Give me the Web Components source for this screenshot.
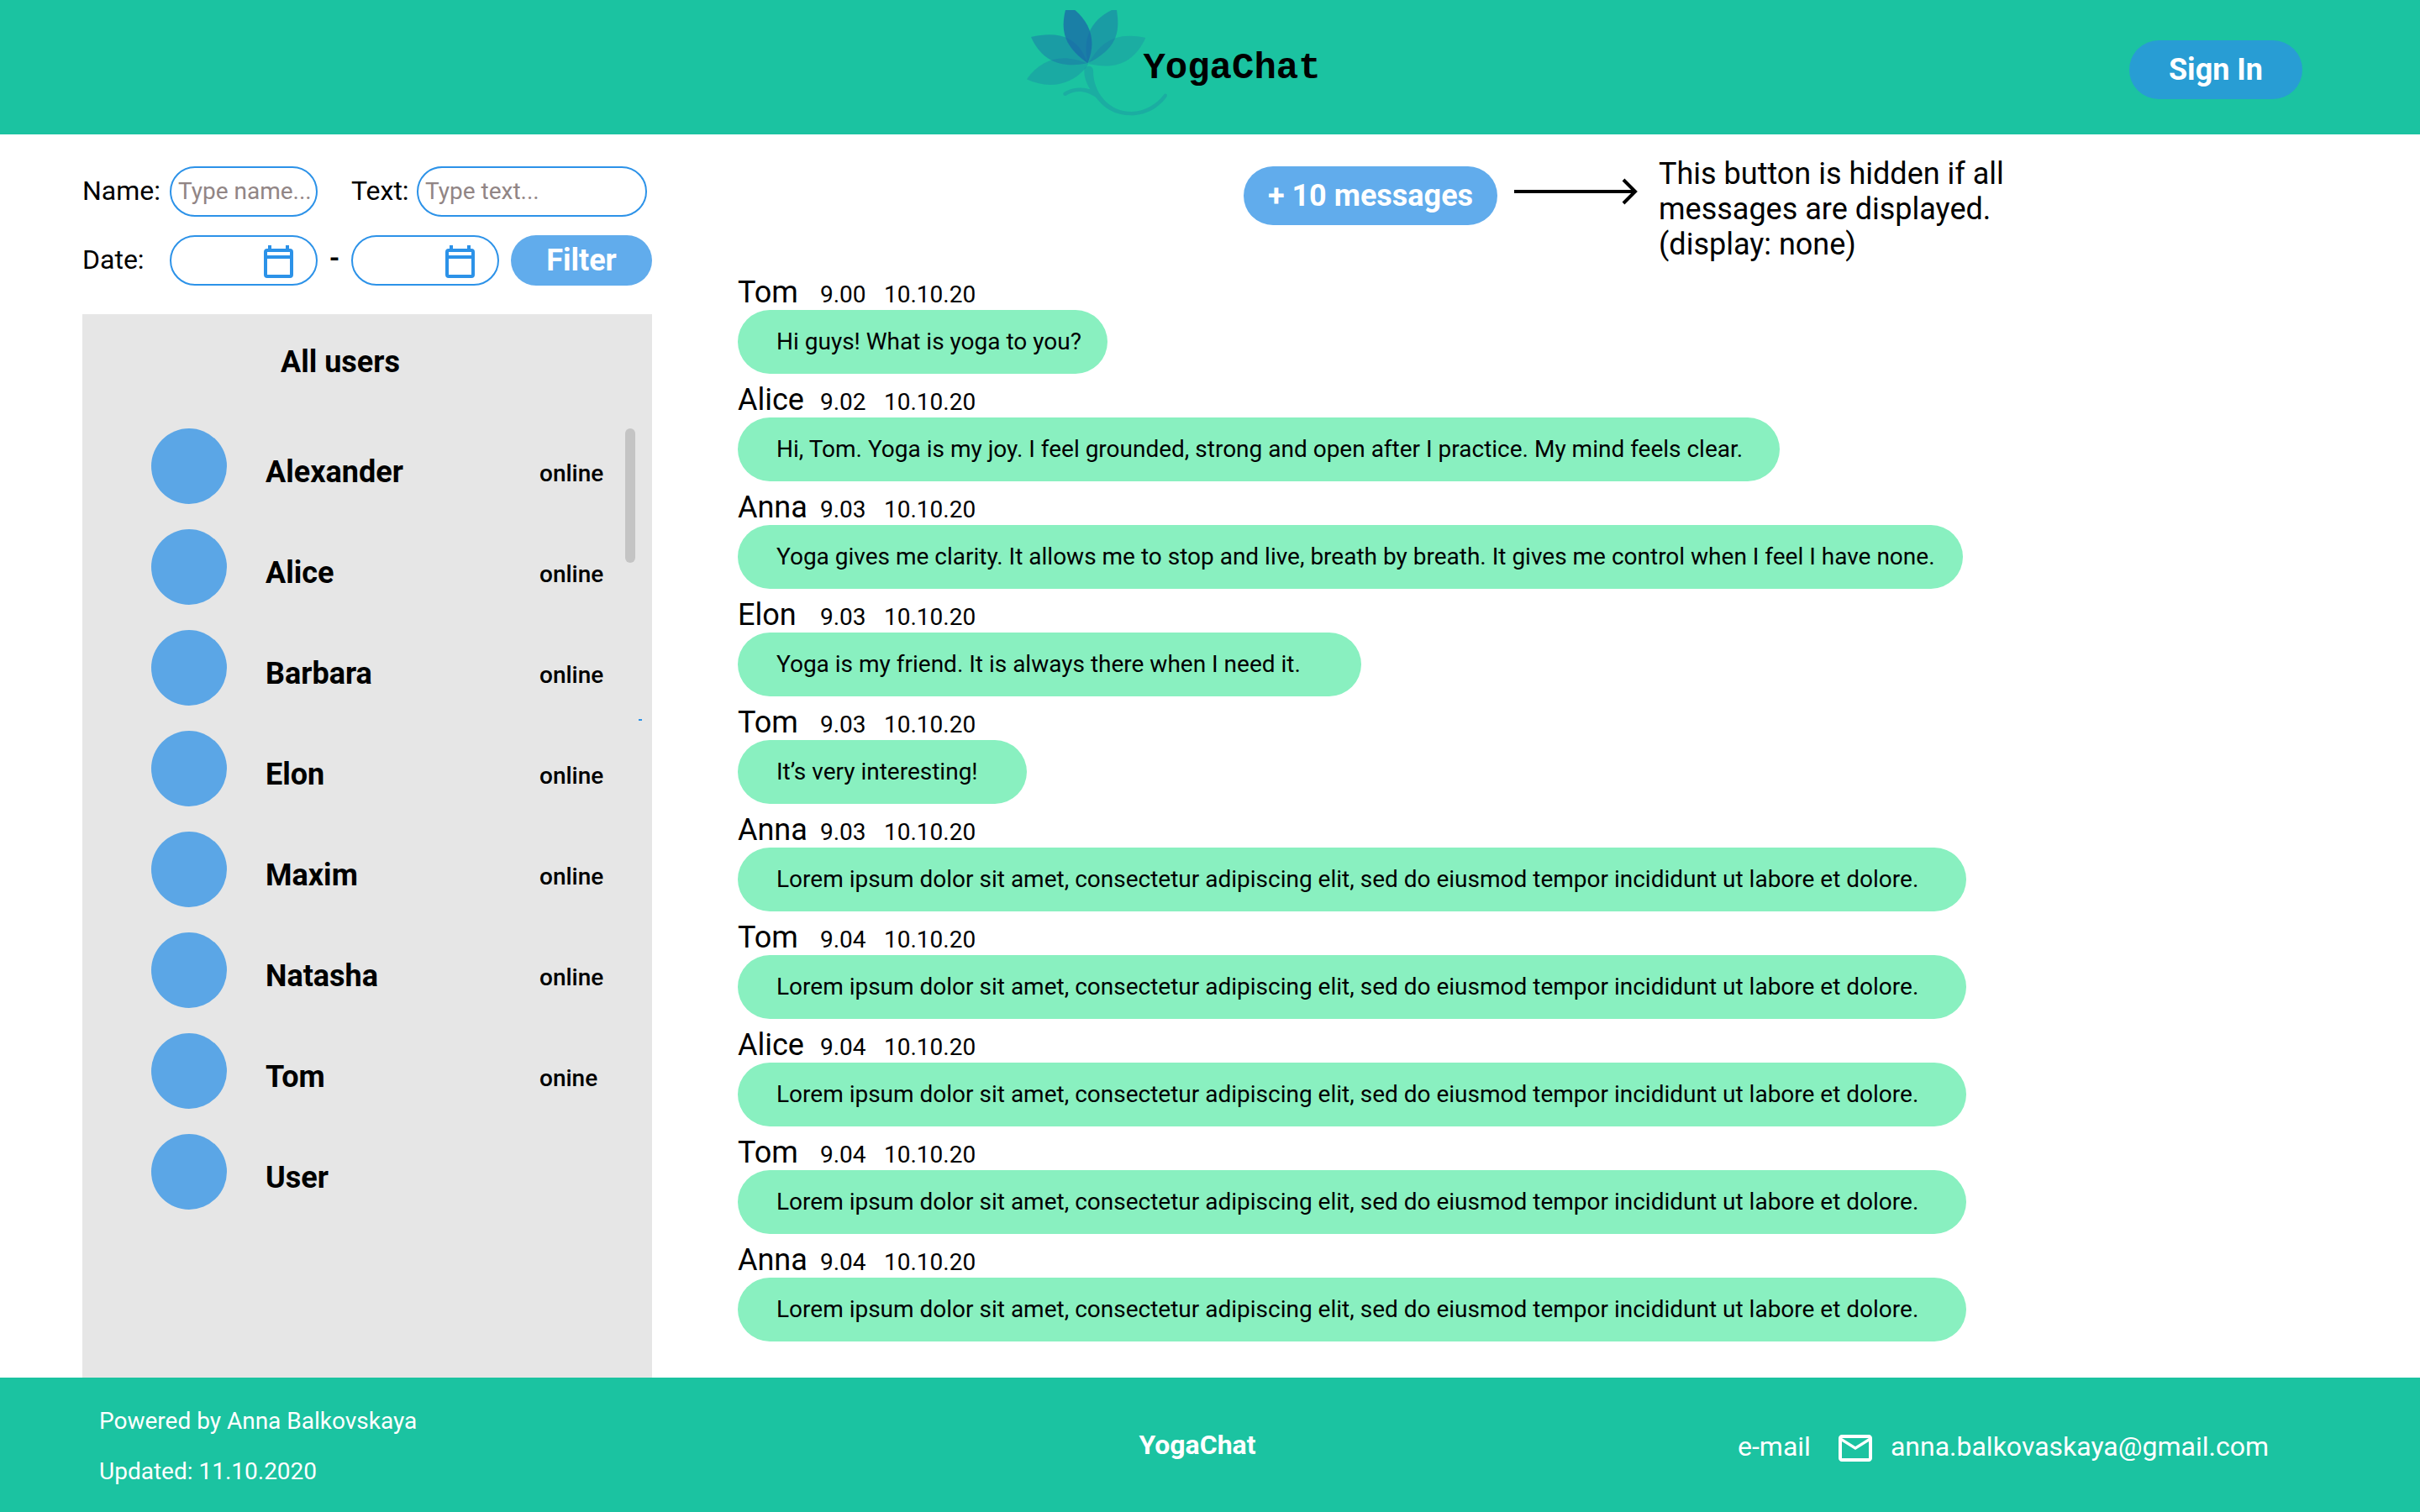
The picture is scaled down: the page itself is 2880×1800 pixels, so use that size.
<!DOCTYPE html>
<html lang="en">
<head>
<meta charset="utf-8">
<title>YogaChat</title>
<style>
html,body{margin:0;min-height:100%}
body{font-family:Roboto,"Liberation Sans",sans-serif;color:#000;background:#fff}
</style>
</head>
<body>
<yoga-app></yoga-app>
<script>
const define = (name, html, setup) => {
  const template = document.createElement('template');
  template.innerHTML = html;
  customElements.define(name, class extends HTMLElement {
    constructor() {
      super();
      this.attachShadow({ mode: 'open' }).append(template.content.cloneNode(true));
    }
    connectedCallback() { if (setup) setup(this, this.shadowRoot); }
  });
};

define('pill-button', `
<style>
:host{display:inline-flex}
button{flex:1;height:var(--pill-height,70px);padding:0;border:0;border-radius:35px;background:var(--pill-color,#61acec);color:#fff;font:700 36px/42px Roboto,"Liberation Sans",sans-serif;cursor:pointer}
</style>
<button type="button"><slot></slot></button>`);

define('lotus-logo', `
<style>
:host{display:flex;align-items:flex-start}
svg{flex:none;width:180px;height:150px}
span{margin-left:-42px;padding-top:56px;font:700 44px/50px "Liberation Mono",monospace}
</style>
<svg viewBox="36 0 540 450" aria-hidden="true">
<g fill="#1a6ca8">
<path fill-opacity=".25" d="M460 135C350 110 295 155 256 228C350 250 420 225 460 135Z"/>
<path fill-opacity=".28" d="M36 283C90 205 170 190 256 228C230 270 180 303 120 303C90 303 60 295 36 283Z"/>
<path fill-opacity=".45" d="M51 132C150 110 220 130 253 226C160 245 90 220 51 132Z"/>
<path fill-opacity=".45" d="M339 36H357C370 120 355 175 253 226C235 140 260 75 339 36Z"/>
<path fill-opacity=".78" d="M174 36H208C265 85 285 150 253 226C190 180 150 130 174 36Z"/>
<path fill-opacity=".25" d="M241 252C241 231 273 231 273 252C272 330 330 400 410 399C460 398 500 370 525 338C530 330 541 337 535 346C500 395 450 412 410 412C350 412 310 385 282 347C250 325 210 318 176 341C167 345 162 333 170 329C205 308 240 312 262 319C248 295 241 275 241 252Z"/>
</g>
</svg>
<span>YogaChat</span>`);

define('site-header', `
<style>
:host{display:block;background:#1bc3a1}
header{display:grid;grid-template-columns:1fr auto 1fr;height:160px;padding:0 140px 0 54px}
pill-button{--pill-color:#289dd4;width:206px;margin-top:48px;justify-self:end;align-self:start}
</style>
<header><span></span><lotus-logo></lotus-logo><pill-button>Sign In</pill-button></header>`);

define('text-field', `
<style>
:host{display:flex;align-items:center}
label{padding-bottom:2px;font-size:32px;line-height:38px;width:var(--label-width)}
input{box-sizing:border-box;flex:1;min-width:0;height:60px;padding:0 0 2px 8px;border:2px solid #2c92e8;border-radius:30px;font:28px/34px Roboto,"Liberation Sans",sans-serif;background:#fff;outline:0}
input::placeholder{color:#918585;opacity:1}
</style>
<label for="field"></label><input id="field" type="text">`, (el, root) => {
  root.querySelector('label').textContent = el.getAttribute('label');
  root.querySelector('input').placeholder = el.getAttribute('hint');
});

define('date-field', `
<style>
:host{display:grid;width:176px}
input,svg{grid-area:1/1}
input{box-sizing:border-box;width:100%;height:60px;padding:0 70px 0 16px;border:2px solid #2c92e8;border-radius:30px;background:#fff;font:28px/34px Roboto,"Liberation Sans",sans-serif}
svg{width:36px;height:44px;justify-self:end;align-self:center;margin-right:28px;pointer-events:none}
</style>
<input id="date" type="text"><svg viewBox="0 -4 36 44" aria-hidden="true"><g fill="none" stroke="#2c92e8" stroke-width="4"><rect x="2" y="6" width="31" height="31" rx="2"/><path d="M2 14H33M7 0V6M28 0V6"/></g></svg>`, (el, root) => {
  root.querySelector('input').setAttribute('aria-label', el.getAttribute('label'));
});

define('filter-form', `
<style>
:host{display:block}
form{display:flex;flex-direction:column;gap:22px}
.row{display:flex;align-items:center}
.name{width:280px;--label-width:104px}
.text{width:352px;margin-left:40px;--label-width:78px}
.caption{width:104px;padding-bottom:2px;font-size:32px;line-height:38px}
.dash{width:40px;padding-bottom:6px;text-align:center;font:700 32px/38px Roboto,"Liberation Sans",sans-serif}
pill-button{flex:1;margin-left:14px;--pill-height:60px}
</style>
<form>
<div class="row"><text-field class="name" label="Name:" hint="Type name..."></text-field><text-field class="text" label="Text:" hint="Type text..."></text-field></div>
<div class="row"><span class="caption">Date:</span><date-field label="From date"></date-field><span class="dash">-</span><date-field label="To date"></date-field><pill-button>Filter</pill-button></div>
</form>`);

define('user-row', `
<style>
:host{display:flex;align-items:center;height:90px}
i{width:90px;height:90px;border-radius:50%;background:#5ba6e6}
b{flex:1;margin-left:46px;padding-top:14px;font-size:36px;line-height:42px}
span{width:78px;padding-top:18px;font-size:28px;font-weight:500;line-height:34px}
</style>
<i></i><b><slot></slot></b><span></span>`, (el, root) => {
  root.querySelector('span').textContent = el.getAttribute('status') || '';
});

define('user-list', `
<style>
:host{display:block;flex:1;background:#e6e6e6}
section{position:relative;padding:36px 56px 0 82px}
h2{margin:0 0 58px 154px;font-size:36px;line-height:42px}
.rows{display:flex;flex-direction:column;gap:30px}
.thumb{position:absolute;top:136px;right:20px;width:12px;height:160px;border-radius:6px;background:#c4c4c4}
.mark{position:absolute;top:482px;right:12px;width:4px;height:2px;background:#2c92e8}
</style>
<section><h2>All users</h2>
<div class="rows">
<user-row status="online">Alexander</user-row>
<user-row status="online">Alice</user-row>
<user-row status="online">Barbara</user-row>
<user-row status="online">Elon</user-row>
<user-row status="online">Maxim</user-row>
<user-row status="online">Natasha</user-row>
<user-row status="onine">Tom</user-row>
<user-row>User</user-row>
</div><div class="thumb"></div><div class="mark"></div></section>`);

define('chat-message', `
<style>
:host{display:block;height:128px}
header{display:grid;grid-template-columns:98px 76px auto;align-items:baseline;height:42px;font-size:28px;line-height:42px}
.author{font-size:36px}
p{box-sizing:border-box;max-width:100%;height:76px;margin:0;padding:0 0 0 46px;border-radius:38px;background:#89f0c0;font-size:28px;line-height:76px;white-space:nowrap}
</style>
<header><span class="author"></span><time class="time"></time><time class="date">10.10.20</time></header>
<p><slot></slot></p>`, (el, root) => {
  root.querySelector('.author').textContent = el.getAttribute('author');
  root.querySelector('.time').textContent = el.getAttribute('time');
  root.querySelector('p').style.width = el.getAttribute('width') + 'px';
});

define('load-more', `
<style>
:host{display:flex;align-items:flex-start}
pill-button{width:302px;margin-top:14px}
svg{width:148px;height:36px;margin:26px 0 0 20px}
p{width:460px;margin:2px 0 0 24px;font-size:36px;line-height:42px}
</style>
<pill-button>+ 10 messages</pill-button>
<svg viewBox="0 0 148 36" aria-hidden="true"><path fill="none" stroke="#000" stroke-width="4" d="M0 18H144M130 4L144 18L130 32"/></svg>
<p>This button is hidden if all messages are displayed. (display: none)</p>`);

define('chat-feed', `
<style>
:host{display:block}
load-more{margin-left:602px;height:143px}
</style>
<load-more></load-more>
<div>
<chat-message author="Tom" time="9.00" width="440">Hi guys! What is yoga to you?</chat-message>
<chat-message author="Alice" time="9.02" width="1240">Hi, Tom. Yoga is my joy. I feel grounded, strong and open after I practice. My mind feels clear.</chat-message>
<chat-message author="Anna" time="9.03" width="1458">Yoga gives me clarity. It allows me to stop and live, breath by breath. It gives me control when I feel I have none.</chat-message>
<chat-message author="Elon" time="9.03" width="742">Yoga is my friend. It is always there when I need it.</chat-message>
<chat-message author="Tom" time="9.03" width="344">It’s very interesting!</chat-message>
<chat-message author="Anna" time="9.03" width="1462">Lorem ipsum dolor sit amet, consectetur adipiscing elit, sed do eiusmod tempor incididunt ut labore et dolore.</chat-message>
<chat-message author="Tom" time="9.04" width="1462">Lorem ipsum dolor sit amet, consectetur adipiscing elit, sed do eiusmod tempor incididunt ut labore et dolore.</chat-message>
<chat-message author="Alice" time="9.04" width="1462">Lorem ipsum dolor sit amet, consectetur adipiscing elit, sed do eiusmod tempor incididunt ut labore et dolore.</chat-message>
<chat-message author="Tom" time="9.04" width="1462">Lorem ipsum dolor sit amet, consectetur adipiscing elit, sed do eiusmod tempor incididunt ut labore et dolore.</chat-message>
<chat-message author="Anna" time="9.04" width="1462">Lorem ipsum dolor sit amet, consectetur adipiscing elit, sed do eiusmod tempor incididunt ut labore et dolore.</chat-message>
</div>`);

define('site-footer', `
<style>
:host{display:block;background:#1bc3a1;color:#fff}
footer{display:grid;grid-template-columns:1fr auto 1fr;align-items:center;box-sizing:border-box;height:160px;padding:0 148px 0 118px}
.credits{padding-top:4px}
p{margin:0;font-size:28px;line-height:60px}
b{font-size:32px;line-height:38px}
.contact{display:flex;align-items:center;justify-self:end;padding:4px 32px 0 0;font-size:32px;line-height:38px}
svg{width:48px;height:48px;margin:4px 18px 0 29px}
a{color:inherit;text-decoration:none}
</style>
<footer>
<div class="credits"><p>Powered by Anna Balkovskaya</p><p>Updated: 11.10.2020</p></div>
<b>YogaChat</b>
<div class="contact"><span>e-mail</span><svg viewBox="0 0 24 24" aria-hidden="true"><path fill="#fff" d="M22 6c0-1.100-.9-2-2-2H4c-1.100 0-2 .9-2 2v12c0 1.100 .9 2 2 2h16c1.100 0 2-.9 2-2zm-2 0l-8 5-8-5zm0 12H4V8l8 5 8-5z"/></svg><a href="mailto:anna.balkovaskaya@gmail.com">anna.balkovaskaya@gmail.com</a></div>
</footer>`);

define('yoga-app', `
<style>
:host{display:flex;flex-direction:column;min-height:100vh}
main{flex:1;display:flex}
aside{display:flex;flex-direction:column;width:678px;margin-left:98px;padding-top:38px}
filter-form{margin-bottom:34px}
chat-feed{flex:1;margin-left:102px;padding-top:24px}
</style>
<site-header></site-header>
<main><aside><filter-form></filter-form><user-list></user-list></aside><chat-feed></chat-feed></main>
<site-footer></site-footer>`);
</script>
</body>
</html>
